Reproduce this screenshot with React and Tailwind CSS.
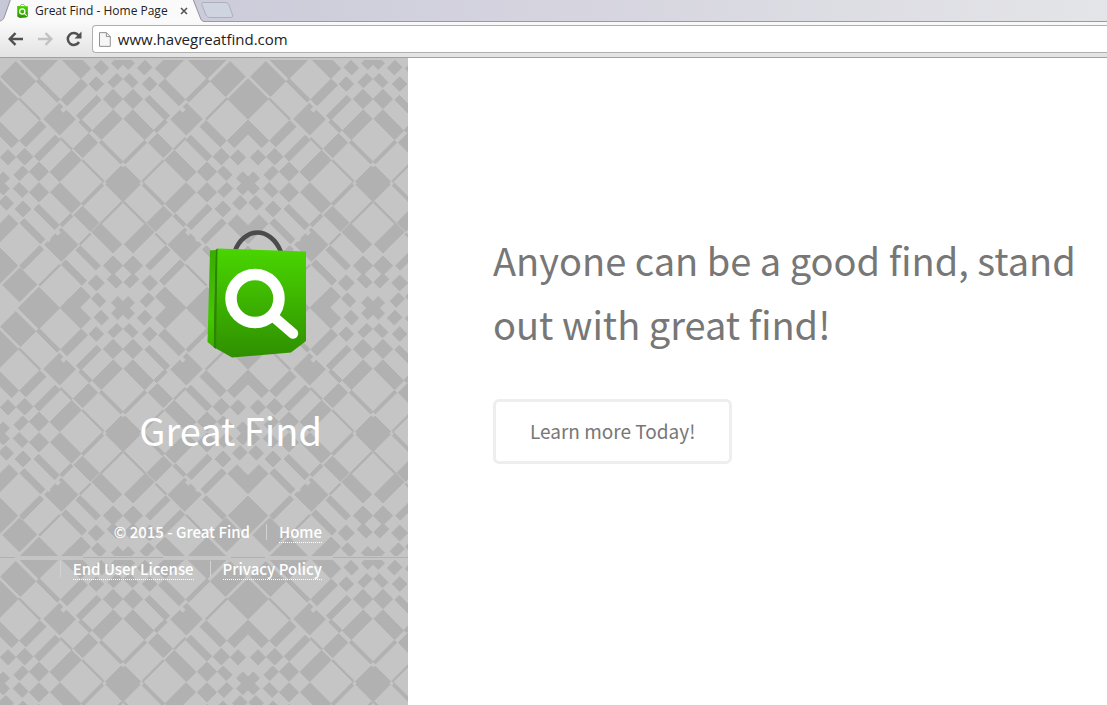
import React from "react";

// Each cell is [u0, u1, v0, v1] with u = x + y and v = x - y.
const DARK = [
  [66, 185, -60, 31], [63, 187, 48, 173], [813, 937, -702, -577], [64, 186, -196, -74],
  [186, 312, -74, -67], [315, 352, -195, -74], [187, 312, -240, -198], [322, 418, -58, 36],
  [187, 312, 33, 50], [315, 352, 52, 175], [187, 312, 175, 235], [937, 1062, -575, -515],
  [938, 996, -570, -450], [188, 246, 180, 300], [318, 364, 248, 290], [405, 438, 245, 298],
  [353, 397, 183, 227], [441, 499, 181, 239], [410, 437, 50, 172], [503, 557, 53, 178],
  [437, 500, 38, 54], [500, 555, -57, 33], [560, 688, 38, 52], [430, 497, -68, -61],
  [500, 558, -198, -68], [405, 435, -198, -72], [562, 688, -69, -62], [695, 807, -68, 44],
  [353, 403, -253, -203], [307, 353, -303, -257], [437, 495, -259, -201], [400, 435, -315, -262],
  [439, 493, -358, -322], [499, 557, -321, -263], [438, 484, -443, -401], [506, 554, -414, -366],
  [562, 688, -257, -200], [563, 687, -357, -329], [688, 702, -198, -70], [700, 799, -255, -203],
  [803, 810, -198, -72], [505, 559, -570, -449], [563, 687, -442, -415], [702, 802, -432, -332],
  [686, 702, -325, -262], [803, 810, -325, -262], [805, 932, -252, -200], [812, 932, -355, -328],
  [811, 935, -442, -414], [690, 713, -570, -450], [805, 812, -570, -448], [566, 684, -694, -576],
  [697, 798, -679, -575], [941, 999, -319, -261], [948, 996, -416, -368], [993, 1047, -348, -312],
  [1005, 1055, -454, -418],
  [1077, 1177, -406, -368], [1108, 1146, -437, -337], [327, 427, 344, 382], [358, 396, 313, 413],
  [328, 428, -407, -369], [359, 397, -438, -338],
];
const LIGHT = [
  [344, 362, 20, 44], [690, 704, 34, 48], [692, 704, -76, -62], [700, 714, -366, -346], [686, 706, -414, -398],
];

const cell = ([a, b, c, d]) =>
  `M${(a + c) / 2} ${(a - c) / 2}L${(a + d) / 2} ${(a - d) / 2}L${(b + d) / 2} ${(b - d) / 2}L${(b + c) / 2} ${(b - c) / 2}Z`;
const darkPath = DARK.map(cell).join("");
const lightPath = LIGHT.map(cell).join("");

function Half() {
  return (
    <g clipPath="url(#half)">
      <path d={darkPath} fill="#b1b1b1" stroke="#b1b1b1" strokeWidth="3" />
      <path d={lightPath} fill="#c5c5c5" />
    </g>
  );
}

function PatternBackdrop() {
  return (
    <svg className="absolute inset-0 h-full w-full" aria-hidden="true">
      <defs>
        <clipPath id="half">
          <rect x="-5" y="10" width="375.5" height="750" />
        </clipPath>
        <pattern id="argyle" patternUnits="userSpaceOnUse" x="-2" y="1" width="250" height="250">
          <g transform="scale(0.33333) translate(5 -10)">
            <Half />
            <g transform="translate(740 0) scale(-1 1)">
              <Half />
            </g>
          </g>
        </pattern>
        <pattern id="seam" patternUnits="userSpaceOnUse" x="-2" y="-2" width="250" height="500">
          <rect width="250" height="4" fill="#c5c5c5" />
          <path d="M0 1.5H17M85 1.5H165M233 1.5H250" stroke="#b1b1b1" />
        </pattern>
      </defs>
      <rect width="100%" height="100%" fill="#c5c5c5" />
      <rect width="100%" height="100%" fill="url(#argyle)" />
      <rect width="100%" height="100%" fill="url(#seam)" />
    </svg>
  );
}

function BagLogo({ className }) {
  return (
    <svg viewBox="0 0 100 128" className={className} role="img" aria-label="Great Find">
      <defs>
        <linearGradient id="front" x1="0" y1="0" x2="0" y2="1">
          <stop offset="0" stopColor="#49d600" />
          <stop offset="1" stopColor="#2f8f00" />
        </linearGradient>
        <linearGradient id="side" x1="0" y1="0" x2="0" y2="1">
          <stop offset="0" stopColor="#38ac00" />
          <stop offset="0.7" stopColor="#45c800" />
          <stop offset="1" stopColor="#3cae00" />
        </linearGradient>
      </defs>
      <path d="M27.500 22C32 9 42 2.500 50.500 2.500S69 9 74 22" fill="none" stroke="#4b4b4b" strokeWidth="4.500" />
      <path d="M8.500 20L10.500 18.500L99 21.500V111L84 122.500L25 127.500L6.500 117Z" fill="url(#front)" />
      <path d="M3 20.500L8.500 20L6.500 117L0.500 112Z" fill="url(#side)" />
      <path d="M8.500 20L10.500 18.500L9 119L6.500 117Z" fill="#2b8500" />
      <circle cx="48" cy="68.500" r="24" fill="none" stroke="#fff" strokeWidth="11.500" />
      <path d="M68 88L86 103.500" stroke="#fff" strokeWidth="10.500" strokeLinecap="round" />
    </svg>
  );
}

function Browser() {
  return (
    <header className="shrink-0 border-b border-[#a0a0a0] font-['Open_Sans',sans-serif]">
      <div className="relative flex h-[21px] bg-linear-to-r from-[#c6c7d7] via-[#d5d4df] to-[#e4e5e8]">
        <svg className="absolute left-0 top-0 h-[22px] w-full" aria-hidden="true">
          <path d="M0 21.500H4000" stroke="#9a9aa4" />
          <path d="M-1 22V21C3 21 4 18 5 15L10 1C11 -2 12 -3 14 -3H188C191 -3 193 -1 194 2L200 17C201 20 202 21.500 205 21.500V22Z" fill="#fafafa" />
          <path d="M-1 21C3 21 4 18 5 15L11 -2M193 -1L200 17C201 20 202 21.500 205 21.500" fill="none" stroke="#92929c" />
          <path d="M203 2.500H225C227 2.500 228 3.500 229 5L232.500 15C233 17 232 17.500 230 17.500H210C208 17.500 206.500 16.500 206 15L202 5C201.500 3.500 201.500 2.500 203 2.500Z" fill="#cfd5e0" stroke="#adb0bb" />
        </svg>
        <div className="relative flex w-[200px] items-center pl-4">
          <BagLogo className="h-[14px] w-[13px]" />
          <span className="ml-1.5 w-[142px] whitespace-nowrap text-[12px] leading-[20px] text-[#222]">Great Find - Home Page</span>
          <button aria-label="Close tab" className="ml-[3px] flex size-2">
            <svg viewBox="0 0 8 8" className="size-2">
              <path d="M1 1L7 7M7 1L1 7" stroke="#555" strokeWidth="1.600" />
            </svg>
          </button>
        </div>
      </div>
      <div className="flex h-9 items-center bg-linear-to-b from-[#fafafa] to-[#e3e3e3] pl-2">
        <button aria-label="Back" className="flex w-[29px]">
          <svg viewBox="0 0 16 14" className="h-[14px] w-4" fill="none" stroke="#505050" strokeWidth="2.400">
            <path d="M15 7H2M7.500 1.200L1.700 7L7.500 12.800" />
          </svg>
        </button>
        <button aria-label="Forward" className="flex w-[29px]">
          <svg viewBox="0 0 16 14" className="h-[14px] w-4" fill="none" stroke="#c2c2c2" strokeWidth="2.400">
            <path d="M1 7H14M8.500 1.200L14.300 7L8.500 12.800" />
          </svg>
        </button>
        <button aria-label="Reload" className="flex w-[26px]">
          <svg viewBox="0 0 16 16" className="size-4">
            <path d="M13 11A6 6 0 1 1 12.500 4.200" fill="none" stroke="#505050" strokeWidth="2.500" />
            <path d="M15.500 0.500V7.500H8.500Z" fill="#505050" />
          </svg>
        </button>
        <label className="flex h-7 flex-1 items-center rounded-l-sm border border-r-0 border-[#b0b0b0] bg-white pl-1.5">
          <svg viewBox="0 0 12 15" className="h-[15px] w-3" fill="#f6f6f6" stroke="#8e8e8e">
            <path d="M0.500 0.500H7.500L11.500 4.500V14.500H0.500ZM7.500 0.500V4.500H11.500" />
          </svg>
          <input aria-label="Address" defaultValue="www.havegreatfind.com" className="ml-[7px] w-full bg-transparent text-[15px] text-[#222] outline-none" />
        </label>
      </div>
    </header>
  );
}

function FooterLink({ children }) {
  return (
    <li className="flex h-[37px] items-center">
      <span className="mr-3 h-4 w-px bg-[#d2d2d2]" />
      <a href="#" className="border-b border-dotted border-white leading-[21px]">{children}</a>
    </li>
  );
}

export default function App() {
  return (
    <div className="flex min-h-screen flex-col bg-white font-['Noto_Sans_CJK_SC',sans-serif]">
      <Browser />
      <div className="flex flex-1">
        <aside className="relative w-[408px] shrink-0">
          <PatternBackdrop />
          <div className="relative flex flex-col items-end pr-[86px] pt-[172px] text-white">
            <BagLogo className="mr-[15px] h-[128px] w-[100px]" />
            <h1 className="mt-10 text-[38px] leading-[64px]">Great Find</h1>
            <ul className="mt-[51px] flex w-[270px] flex-wrap justify-end gap-x-4 text-[15px] font-medium leading-[37px]">
              <li>© 2015 - Great Find</li>
              <FooterLink>Home</FooterLink>
              <FooterLink>End User License</FooterLink>
              <FooterLink>Privacy Policy</FooterLink>
            </ul>
          </div>
        </aside>
        <main className="flex-1 pl-[85px] pt-[170px] text-[#777]">
          <h2 className="text-[38px] leading-[64px]">Anyone can be a good find, stand out with great find!</h2>
          <button className="mt-[43px] h-[65px] rounded-md border-[3px] border-[#eee] px-[34px] text-[19px]">Learn more Today!</button>
        </main>
      </div>
    </div>
  );
}
